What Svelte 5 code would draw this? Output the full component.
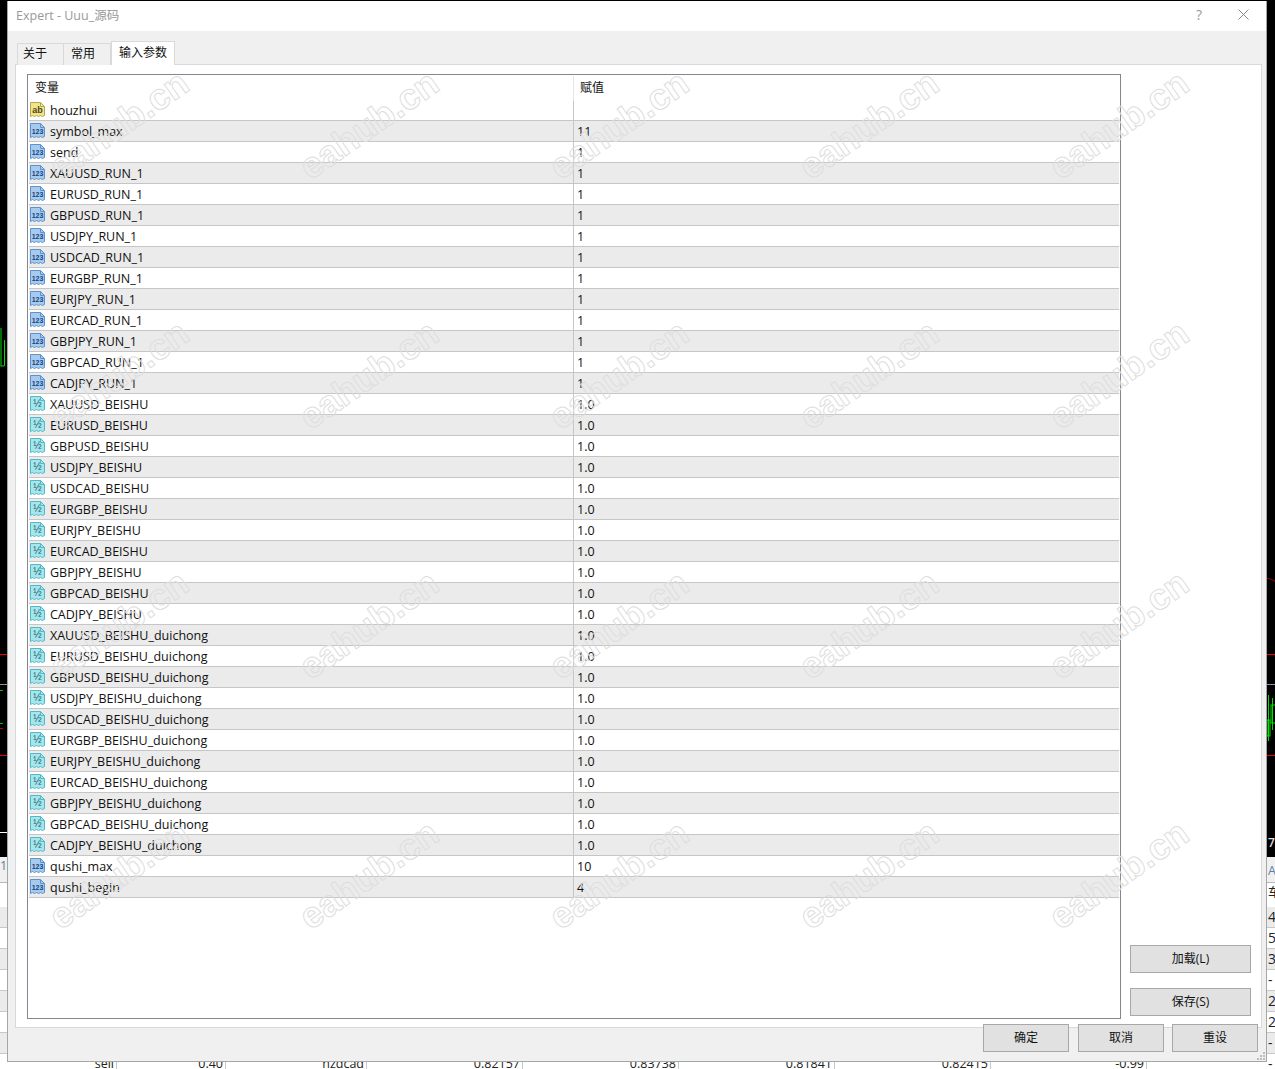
<script lang="ts">
	const pairs = ['XAUUSD', 'EURUSD', 'GBPUSD', 'USDJPY', 'USDCAD', 'EURGBP', 'EURJPY', 'EURCAD', 'GBPJPY', 'GBPCAD', 'CADJPY'];

	const params = [
		{ type: 'str', name: 'houzhui', value: '' },
		{ type: 'int', name: 'symbol_max', value: '11' },
		{ type: 'int', name: 'send', value: '1' },
		...pairs.map((p) => ({ type: 'int', name: `${p}_RUN_1`, value: '1' })),
		...pairs.map((p) => ({ type: 'dbl', name: `${p}_BEISHU`, value: '1.0' })),
		...pairs.map((p) => ({ type: 'dbl', name: `${p}_BEISHU_duichong`, value: '1.0' })),
		{ type: 'int', name: 'qushi_max', value: '10' },
		{ type: 'int', name: 'qushi_begin', value: '4' }
	];

	const iconLabel: Record<string, string> = { str: 'ab', int: '123', dbl: '½' };

	const backRows = [
		['', '', '', '', '', '', '', '', '4'],
		['', '', '', '', '', '', '', '', '5'],
		['', '', '', '', '', '', '', '', '3'],
		['', '', '', '', '', '', '', '', '-'],
		['', '', '', '', '', '', '', '', '2'],
		['', '', '', '', '', '', '', '', '2'],
		['', '', '', '', '', '', '', '', '-'],
		['sell', '0.40', 'hzdcad', '0.82157', '0.83738', '0.81841', '0.82415', '-0.99', '-']
	];

	const marks = Array.from({ length: 20 }, (_, i) => i);
</script>

<div class="desktop">
	<svg class="chart" width="1275" height="838" viewBox="0 0 1275 838">
		<g stroke="#00e000" fill="none">
			<path d="M1 328V366M0.5 366H4M4.5 340V366M13.5 340V378" />
			<rect x="10.5" y="342" width="5" height="14" fill="#fff" stroke="#00ff00" />
			<path d="M1268.5 695V741M1272.5 698V730" />
			<rect x="1267" y="720" width="3" height="16" />
			<rect x="1271" y="705" width="5" height="18" />
		</g>
		<g stroke="#f00000">
			<path d="M0 654.5H24M1255 654.5H1275M0 755.5H24M1255 755.5H1275" />
			<path d="M1267 578l5 1.5 3 2" fill="none" stroke="#a00000" />
		</g>
		<path d="M0 684.5H24M1255 684.5H1275" stroke="#8a94a0" />
		<path d="M0 690.5H3M0 723.5H3" stroke="#00c000" />
		<path d="M0 728.5H3" stroke="#c00000" />
		<path d="M0 832.5H8" stroke="#fff" />
	</svg>
	<div class="clock">7:</div>
	<div class="term-tabs"><span class="term-num">1</span><span class="term-tab-end">A</span></div>
	<div class="term-head"><span></span><span class="term-tab-end">车</span></div>
	{#each backRows as row, i}
		<div class="back-row" class:shade={i % 2 === 0}>
			{#each row as cell}
				<div class="back-cell">{cell}</div>
			{/each}
		</div>
	{/each}
</div>

<div class="window">
	<header class="titlebar">
		<span class="title">Expert - Uuu_源码</span>
		<span class="help">?</span>
		<svg class="close" width="11" height="11" viewBox="0 0 11 11">
			<path d="M0.5 0.5L10.5 10.5M10.5 0.5L0.5 10.5" stroke="#8a8a8a" fill="none" />
		</svg>
	</header>

	<div class="content">
		<div class="tabs">
			<div class="tab">关于</div>
			<div class="tab">常用</div>
			<div class="tab active">输入参数</div>
		</div>

		<div class="panel">
			<div class="grid">
				<div class="grid-head">
					<div class="head-name">变量</div>
					<div class="head-value">赋值</div>
				</div>
				{#each params as p, i}
					<div class="row" class:shade={i % 2 === 1}>
						<div class="name">
							<svg class="icon {p.type}" width="17" height="17" viewBox="0 0 17 17">
								<path class="page" d="M1.5 1.5H11.5L15.5 5.5V14.5L13.5 15.5L11.5 14.5L9.5 15.5L7.5 14.5L5.5 15.5L3.5 14.5L1.5 15.5Z" />
								<path class="fold" d="M11.5 1.5V5.5H15.5" />
								<text class="label" x="8.5" y="12">{iconLabel[p.type]}</text>
							</svg>
							<span>{p.name}</span>
						</div>
						<div class="value">{p.value}</div>
					</div>
				{/each}
			</div>

			<div class="side">
				<button>加载(L)</button>
				<button>保存(S)</button>
			</div>
		</div>

		<div class="footer">
			<button>确定</button>
			<button>取消</button>
			<button>重设</button>
		</div>
	</div>

	<svg class="grip" width="9" height="9" viewBox="0 0 9 9">
		<g fill="#bdbdbd">
			<rect x="6" y="0" width="2" height="2" />
			<rect x="3" y="3" width="2" height="2" />
			<rect x="6" y="3" width="2" height="2" />
			<rect x="0" y="6" width="2" height="2" />
			<rect x="3" y="6" width="2" height="2" />
			<rect x="6" y="6" width="2" height="2" />
		</g>
	</svg>
</div>

<div class="marks">
	{#each marks as m (m)}
		<div class="mark"><span>eahub.cn</span></div>
	{/each}
</div>

<style>
	:global(body) {
		margin: 0;
		background: #000;
		overflow: hidden;
	}

	.desktop {
		width: 1275px;
		height: 1069px;
		overflow: hidden;
		position: relative;
		background: #000;
		font-family: 'Open Sans', 'Noto Sans CJK SC', sans-serif;
		font-size: 12.5px;
		color: #222;
	}

	.chart {
		display: block;
	}

	.clock {
		height: 19px;
		background: #000;
		color: #ddd;
		font-weight: 600;
		font-size: 12px;
		line-height: 10px;
		padding-left: 1268px;
		white-space: nowrap;
	}

	.term-tabs,
	.term-head {
		display: flex;
		justify-content: space-between;
		background: #fff;
		line-height: 23px;
		white-space: nowrap;
	}

	.term-tabs {
		height: 23px;
		border-top: 2px solid #f0f0f0;
		background: #f0f0f0;
		color: #5f7f9f;
	}

	.term-num {
		line-height: 14px;
	}

	.term-head {
		height: 24px;
		border-top: 1px solid #b8b8b8;
		line-height: 20px;
	}

	.term-tab-end {
		width: 7px;
	}

	.back-row {
		display: grid;
		grid-template-columns: 117px 109px 141px 156px 156px 156px 156px 156px 128px;
		height: 21px;
		box-sizing: border-box;
		border-bottom: 1px solid #c8c8c8;
		background: #fff;
	}

	.back-row.shade {
		background: #ebebeb;
	}

	.back-cell {
		text-align: right;
		padding-right: 2px;
		border-right: 1px solid #c8c8c8;
		line-height: 20px;
		white-space: nowrap;
	}

	.back-cell:last-child {
		text-align: left;
		border-right: 0;
		padding-left: 121px;
		padding-right: 0;
		font-size: 14px;
	}

	.window {
		position: absolute;
		left: 7px;
		top: 1px;
		width: 1260px;
		height: 1061px;
		box-sizing: border-box;
		border: 1px solid #a6a6a6;
		border-top: 0;
		background: #f0f0f0;
		display: flex;
		flex-direction: column;
		font-family: 'Open Sans', 'Noto Sans CJK SC', sans-serif;
		font-size: 12.5px;
		color: #111;
	}

	.titlebar {
		height: 30px;
		background: #fff;
		display: flex;
		align-items: center;
		flex: none;
		padding: 0 17px 4px 8px;
		box-sizing: border-box;
		color: #999;
	}

	.title {
		flex: 1;
	}

	.help {
		margin-right: 36px;
		font-size: 14px;
	}

	.content {
		flex: 1;
		display: flex;
		flex-direction: column;
		padding: 10px 4px 0 7px;
		min-height: 0;
	}

	.tabs {
		display: flex;
		align-items: flex-end;
		height: 24px;
		padding-left: 2px;
		margin-bottom: -1px;
		position: relative;
		z-index: 1;
		font-size: 12px;
	}

	.tab {
		height: 22px;
		width: 47px;
		box-sizing: border-box;
		border: 1px solid #d9d9d9;
		border-left-width: 0;
		border-bottom-width: 0;
		background: #f0f0f0;
		padding-left: 6px;
		line-height: 20px;
	}

	.tab:first-child {
		border-left-width: 1px;
		padding-left: 5px;
	}

	.tab:nth-child(2) {
		padding-left: 7px;
	}

	.tab.active {
		height: 24px;
		width: 64px;
		background: #fff;
		border-left-width: 1px;
		padding-left: 7px;
		line-height: 21px;
	}

	.panel {
		height: 964px;
		box-sizing: border-box;
		flex: none;
		display: flex;
		border: 1px solid #d9d9d9;
		background: #fff;
		padding: 9px 0 8px 11px;
	}

	.grid {
		width: 1094px;
		box-sizing: border-box;
		border: 1px solid #828790;
		padding: 0 1px;
		flex: none;
	}

	.grid-head {
		display: grid;
		grid-template-columns: 544px 1fr;
		height: 25px;
		line-height: 26px;
		font-size: 12px;
	}

	.head-name {
		padding-left: 6px;
	}

	.head-value {
		padding-left: 7px;
		position: relative;
	}

	.head-value::before {
		content: '';
		position: absolute;
		left: 0;
		top: 1px;
		bottom: 0;
		width: 1px;
		background: #e6e6e6;
	}

	.row {
		display: grid;
		grid-template-columns: 544px 1fr;
		grid-template-rows: 20px;
		height: 21px;
		box-sizing: border-box;
		border-bottom: 1px solid #c6c6c6;
		line-height: 22px;
		white-space: nowrap;
	}

	.row.shade {
		background: #ebebeb;
	}

	.name {
		display: flex;
		align-items: flex-start;
		gap: 4px;
		padding-left: 1px;
	}

	.value {
		border-left: 1px solid #c6c6c6;
		padding-left: 3px;
	}

	.icon {
		flex: none;
		margin-left: -1px;
		margin-top: 1px;
	}

	.page {
		stroke-width: 1;
	}

	.fold {
		fill: none;
		stroke-width: 1;
	}

	.label {
		font-family: 'Liberation Sans', sans-serif;
		font-size: 7.5px;
		font-weight: 700;
		text-anchor: middle;
	}

	.str .page {
		fill: #f1e58c;
		stroke: #b7a74e;
	}

	.str .fold {
		stroke: #b7a74e;
	}

	.str .label {
		fill: #4d4418;
		font-size: 9px;
	}

	.int .page {
		fill: #a6cbef;
		stroke: #5d92cb;
	}

	.int .fold {
		stroke: #5d92cb;
	}

	.int .label {
		fill: #17447f;
		font-size: 7px;
	}

	.dbl .page {
		fill: #a4e6ec;
		stroke: #55b8c6;
	}

	.dbl .fold {
		stroke: #55b8c6;
	}

	.dbl .label {
		fill: #145a68;
		font-size: 10px;
		font-weight: 400;
	}

	.side {
		flex: 1;
		display: flex;
		flex-direction: column;
		justify-content: flex-end;
		align-items: flex-start;
		gap: 15px;
		padding: 0 0 3px 9px;
	}

	button {
		font: inherit;
		font-size: 12px;
		color: #111;
		background: #e1e1e1;
		border: 1px solid #a8a8a8;
		padding: 0 0 2px;
		height: 28px;
		margin: 0;
	}

	.side button {
		width: 121px;
	}

	.footer {
		display: flex;
		justify-content: flex-end;
		gap: 9px;
		padding-right: 4px;
		margin-top: -4px;
	}

	.footer button {
		width: 86px;
	}

	.footer button:last-child {
		margin-left: -1px;
	}

	.grip {
		position: absolute;
		right: 0;
		bottom: 0;
	}

	.marks {
		position: absolute;
		left: -6px;
		top: 0;
		width: 1250px;
		display: grid;
		grid-template-columns: repeat(5, 250px);
		grid-auto-rows: 250px;
		pointer-events: none;
	}

	.mark {
		display: flex;
		align-items: center;
		justify-content: center;
	}

	.mark span {
		font-family: 'Liberation Sans', sans-serif;
		font-size: 36.5px;
		font-weight: 700;
		color: transparent;
		-webkit-text-stroke: 1px #dedede;
		transform: rotate(-35deg);
		white-space: nowrap;
	}
</style>
